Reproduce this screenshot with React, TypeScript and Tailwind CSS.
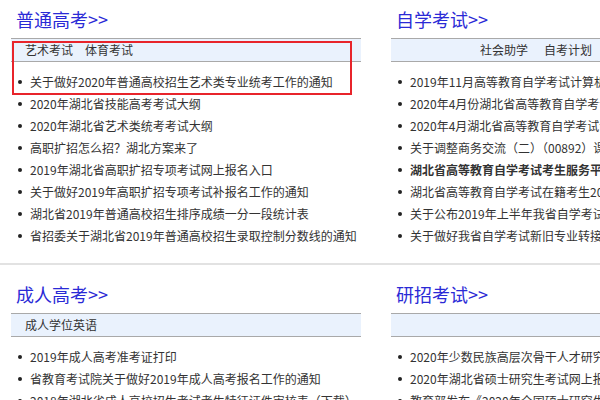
const font = "font-['Microsoft_YaHei','Noto_Sans_CJK_SC',sans-serif]";

type Section = {
  title: string;
  tabs: string[];
  tabsPad?: string;
  items: { text: string; bold?: boolean }[];
};

const topRow: Section[] = [
  {
    title: "普通高考",
    tabs: ["艺术考试", "体育考试"],
    items: [
      { text: "关于做好2020年普通高校招生艺术类专业统考工作的通知" },
      { text: "2020年湖北省技能高考考试大纲" },
      { text: "2020年湖北省艺术类统考考试大纲" },
      { text: "高职扩招怎么招？湖北方案来了" },
      { text: "2019年湖北省高职扩招专项考试网上报名入口" },
      { text: "关于做好2019年高职扩招专项考试补报名工作的通知" },
      { text: "湖北省2019年普通高校招生排序成绩一分一段统计表" },
      { text: "省招委关于湖北省2019年普通高校招生录取控制分数线的通知" },
    ],
  },
  {
    title: "自学考试",
    tabs: ["社会助学", "自考计划"],
    tabsPad: "pl-[89px] gap-4",
    items: [
      { text: "2019年11月高等教育自学考试计算机应用能力考核" },
      { text: "2020年4月份湖北省高等教育自学考试报考简章" },
      { text: "2020年4月湖北省高等教育自学考试课程安排" },
      { text: "关于调整商务交流（二）（00892）课程考试" },
      { text: "湖北省高等教育自学考试考生服务平台", bold: true },
      { text: "湖北省高等教育自学考试在籍考生2019年" },
      { text: "关于公布2019年上半年我省自学考试成绩" },
      { text: "关于做好我省自学考试新旧专业转接工作" },
    ],
  },
];

const bottomRow: Section[] = [
  {
    title: "成人高考",
    tabs: ["成人学位英语"],
    items: [
      { text: "2019年成人高考准考证打印" },
      { text: "省教育考试院关于做好2019年成人高考报名工作的通知" },
      { text: "2018年湖北省成人高校招生考试考生特征证件审核表（下载）" },
    ],
  },
  {
    title: "研招考试",
    tabs: [],
    items: [
      { text: "2020年少数民族高层次骨干人才研究生招生" },
      { text: "2020年湖北省硕士研究生考试网上报名公告" },
      { text: "教育部发布《2020年全国硕士研究生招生工作" },
    ],
  },
];

function Panel({ s, mark }: { s: Section; mark?: boolean }) {
  return (
    <div className="relative w-[350px] shrink-0">
      <h2 className="h-[38px] pl-[5px] pt-[8px] text-[18px] leading-[22px] text-[#2a2ad6]">
        {s.title}&gt;&gt;
      </h2>
      <div
        className={`flex h-[24px] items-center border-y border-[#a9a9a9] bg-[#eaf2fd] text-[12px] text-[#333] ${
          s.tabsPad ?? "pl-[14px] gap-3"
        }`}
      >
        {s.tabs.map((t) => (
          <span key={t}>{t}</span>
        ))}
      </div>
      <ul className="pt-[9px]">
        {s.items.map((it) => (
          <li
            key={it.text}
            className={`flex h-[22px] items-center whitespace-nowrap text-[12px] text-[#333] ${
              it.bold ? "font-bold text-[#222]" : ""
            }`}
          >
            <span className="ml-[7px] mr-[8px] h-[4px] w-[4px] shrink-0 rounded-full bg-[#222]" />
            {it.text}
          </li>
        ))}
      </ul>
      {mark && (
        <div className="absolute left-[1px] top-[41px] h-[54px] w-[340px] border-2 border-[#e8242b]" />
      )}
    </div>
  );
}

export default function App() {
  return (
    <div className={`h-[400px] w-[600px] overflow-hidden bg-white ${font}`}>
      <div className="flex w-[760px] gap-[30px] pl-[11px] h-[263px]">
        <Panel s={topRow[0]} mark />
        <Panel s={topRow[1]} />
      </div>
      <div className="h-[2px] w-full bg-[#e2e2e2]" />
      <div className="flex w-[760px] gap-[30px] pl-[11px] pt-[10px]">
        <Panel s={bottomRow[0]} />
        <Panel s={bottomRow[1]} />
      </div>
    </div>
  );
}
